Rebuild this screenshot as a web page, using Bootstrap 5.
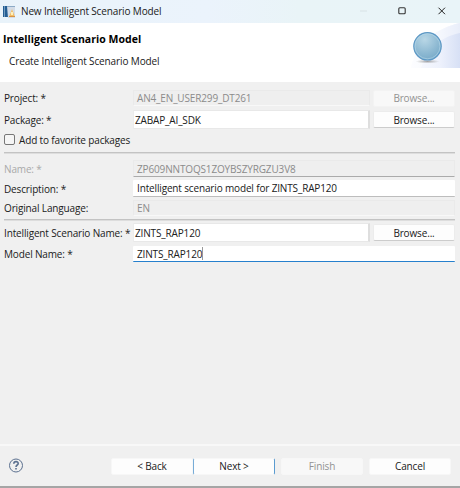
<!DOCTYPE html>
<html lang="en">
<head>
<meta charset="utf-8">
<meta name="viewport" content="width=device-width, initial-scale=1">
<title>New Intelligent Scenario Model</title>
<link href="https://cdn.jsdelivr.net/npm/bootstrap@5.3.0/dist/css/bootstrap.min.css" rel="stylesheet">
<style>
body{font-family:"Open Sans","Noto Sans",sans-serif;font-size:10px;line-height:14px;letter-spacing:-.15px;color:#202020;background:#f0f0f0}
.dialog{width:460px;height:488px;background:#f0f0f0;border-bottom:2px solid #a5a5a5;overflow:hidden;white-space:nowrap}
.titlebar{height:23px;background:linear-gradient(90deg,#e9f3fa,#ebf3fc 45%,#e9f4f7 65%,#e9f4f8);padding-left:3px}
.caption{margin:-1px 0 0 5px;letter-spacing:-.14px}
.banner{height:59px;background:#fff}
.banner h1{font-size:10.5px;line-height:14px;font-weight:700;color:#000;margin:9px 0 0 3px;letter-spacing:.03px}
.banner p{margin:8px 0 0 9px;letter-spacing:-.12px}
.form-area{height:364px;padding:8px 5px 0 4px;border-bottom:2px solid #f8f8f8}
.line{height:17px;margin-bottom:3px}
.line.short{height:16px}
.line.tall{height:19px}
.lbl{width:129px;flex:none}
.lbl.dim{color:#a9a9a9}
.field{height:100%;flex:1;background:#fff;padding:0 4px;border-bottom:1px solid #bdbdbd;border-radius:1px}
.field.off{background:#efefef;color:#8b8b8b;border:1px solid #eaeaea;border-bottom-color:#f8f8f8;padding:0 3px}
.field.off.under{border-bottom-color:#ababab}
.field.combo{padding:0 1px;border:1px solid #e8e8e8;border-right:2px solid #dedede;border-left-color:#ececec}
.field.active{border-bottom-color:#2680cd}
.caret{width:1px;height:13px;background:#999}
.push{width:82px;height:17px;margin-left:3px;padding:0;font-size:inherit;line-height:14px;letter-spacing:inherit;background:#fdfdfd;border:1px solid #ececec;border-bottom-color:#ccc;border-radius:2px;color:#202020}
.push:disabled{background:#f8f8f8;border-color:#f3f3f3;color:#929292;opacity:1}
.check-row{height:21px}
.tick{width:11px;height:11px;border:1px solid #777;border-radius:2px;background:#f5f5f5;margin-right:4px}
.rule{height:2px;background:#c3c3c3;border-bottom:1px solid #ddd}
.rule-upper{margin:2px 0 6px}
.rule-lower{margin:3px 0 2px}
.footer-bar{height:40px;padding:0 9px 0 8px}
.footer-bar .push{margin:0;border-color:#f7f7f7}
.footer-bar .nav-next{border-left-color:#77acd7;border-right-color:#5a9bd0}
.footer-bar .apart{margin-left:6px}
</style>
<script src="https://cdn.jsdelivr.net/npm/bootstrap@5.3.0/dist/js/bootstrap.bundle.min.js"></script>
</head>
<body>
<main class="dialog d-flex flex-column">
  <header class="titlebar d-flex align-items-center">
    <svg width="13" height="14" viewBox="0 0 13 14"><path d="M0 1h5v11H0z" fill="#245d92"/><path d="M1 1h1v11H1z" fill="#6f9ac0"/><path d="M4 1l8 1v11H5z" fill="#d3dce7"/><path d="M4 1h8v1H4z" fill="#8caac6"/><path d="M9 4l3 8H6z" fill="#f3bf69"/><path d="M8 7h2v3H8z" fill="#fff0ba"/><path d="M6 11h6v1H6z" fill="#d79342"/></svg>
    <span class="caption">New Intelligent Scenario Model</span>
    <svg class="ms-auto" width="100" height="23" viewBox="360 0 100 23" fill="none"><path d="M360 11h7" stroke="#d8e2e5"/><rect x="398.8" y="7.8" width="6.4" height="6" rx="1" stroke="#333" stroke-width="1.1"/><path d="M438.500 7.700l6.500 6.500m0-6.500l-6.500 6.500" stroke="#222"/></svg>
  </header>
  <section class="banner d-flex justify-content-between">
    <div><h1>Intelligent Scenario Model</h1><p>Create Intelligent Scenario Model</p></div>
    <svg width="52" height="46" viewBox="408 23 52 46">
      <defs><linearGradient id="sweep" x1="0" x2="1"><stop offset="0" stop-color="#fafbff"/><stop offset=".6" stop-color="#edf1fc"/><stop offset="1" stop-color="#d7e0f5"/></linearGradient>
      <radialGradient id="ball" cx=".4" cy=".25" r=".8"><stop stop-color="#b9d7e6"/><stop offset=".6" stop-color="#8fbad3"/><stop offset="1" stop-color="#76a9c8"/></radialGradient>
      <radialGradient id="shade"><stop stop-color="#777" stop-opacity=".65"/><stop offset="1" stop-color="#888" stop-opacity="0"/></radialGradient></defs>
      <path d="M411 68C415 45 436 28 460 23v45z" fill="url(#sweep)"/>
      <path d="M411 68C415 45 436 28 460 23v10c-18 4-31 13-39 35z" fill="#fff" opacity=".45"/>
      <ellipse cx="427.500" cy="61.500" rx="12" ry="2" fill="url(#shade)"/>
      <circle cx="427.500" cy="46.300" r="13.700" fill="url(#ball)" stroke="#5d98c5" stroke-width="1.200"/>
      <circle cx="427.500" cy="46.300" r="12.500" fill="none" stroke="#b7d8ea" stroke-width=".6"/>
    </svg>
  </section>
  <section class="form-area">
    <div class="line short d-flex align-items-center mb-1"><span class="lbl">Project: *</span><div class="field off d-flex align-items-center">AN4_EN_USER299_DT261</div><button class="btn push" disabled>Browse...</button></div>
    <div class="line tall d-flex align-items-center mb-0"><span class="lbl">Package: *</span><div class="field combo d-flex align-items-center">ZABAP_AI_SDK</div><button class="btn push">Browse...</button></div>
    <div class="check-row d-flex align-items-center"><span class="tick"></span><span>Add to favorite packages</span></div>
    <div class="rule rule-upper"></div>
    <div class="line d-flex align-items-center"><span class="lbl dim">Name: *</span><div class="field off under d-flex align-items-center">ZP609NNTOQS1ZOYBSZYRGZU3V8</div></div>
    <div class="line d-flex align-items-center"><span class="lbl">Description: *</span><div class="field d-flex align-items-center">Intelligent scenario model for ZINTS_RAP120</div></div>
    <div class="line short d-flex align-items-center mb-0"><span class="lbl">Original Language:</span><div class="field off d-flex align-items-center">EN</div></div>
    <div class="rule rule-lower"></div>
    <div class="line tall d-flex align-items-center mb-1"><span class="lbl">Intelligent Scenario Name: *</span><div class="field combo d-flex align-items-center">ZINTS_RAP120</div><button class="btn push">Browse...</button></div>
    <div class="line short d-flex align-items-center"><span class="lbl">Model Name: *</span><div class="field active d-flex align-items-center">ZINTS_RAP120<span class="caret"></span></div></div>
  </section>
  <footer class="footer-bar d-flex align-items-center">
    <svg width="16" height="16" viewBox="0 0 16 16" fill="none" stroke="#5c7190"><circle cx="8" cy="7.500" r="6.500"/><path d="M5.800 5.800c0-3 4.600-2.800 4.400-.2C10.100 7.100 8 7 8 9M8 10v1.500" stroke-width="1.600"/></svg>
    <button class="btn push ms-auto">&lt; Back</button><button class="btn push nav-next">Next &gt;</button><button class="btn push apart" disabled>Finish</button><button class="btn push apart">Cancel</button>
  </footer>
</main>
</body>
</html>
